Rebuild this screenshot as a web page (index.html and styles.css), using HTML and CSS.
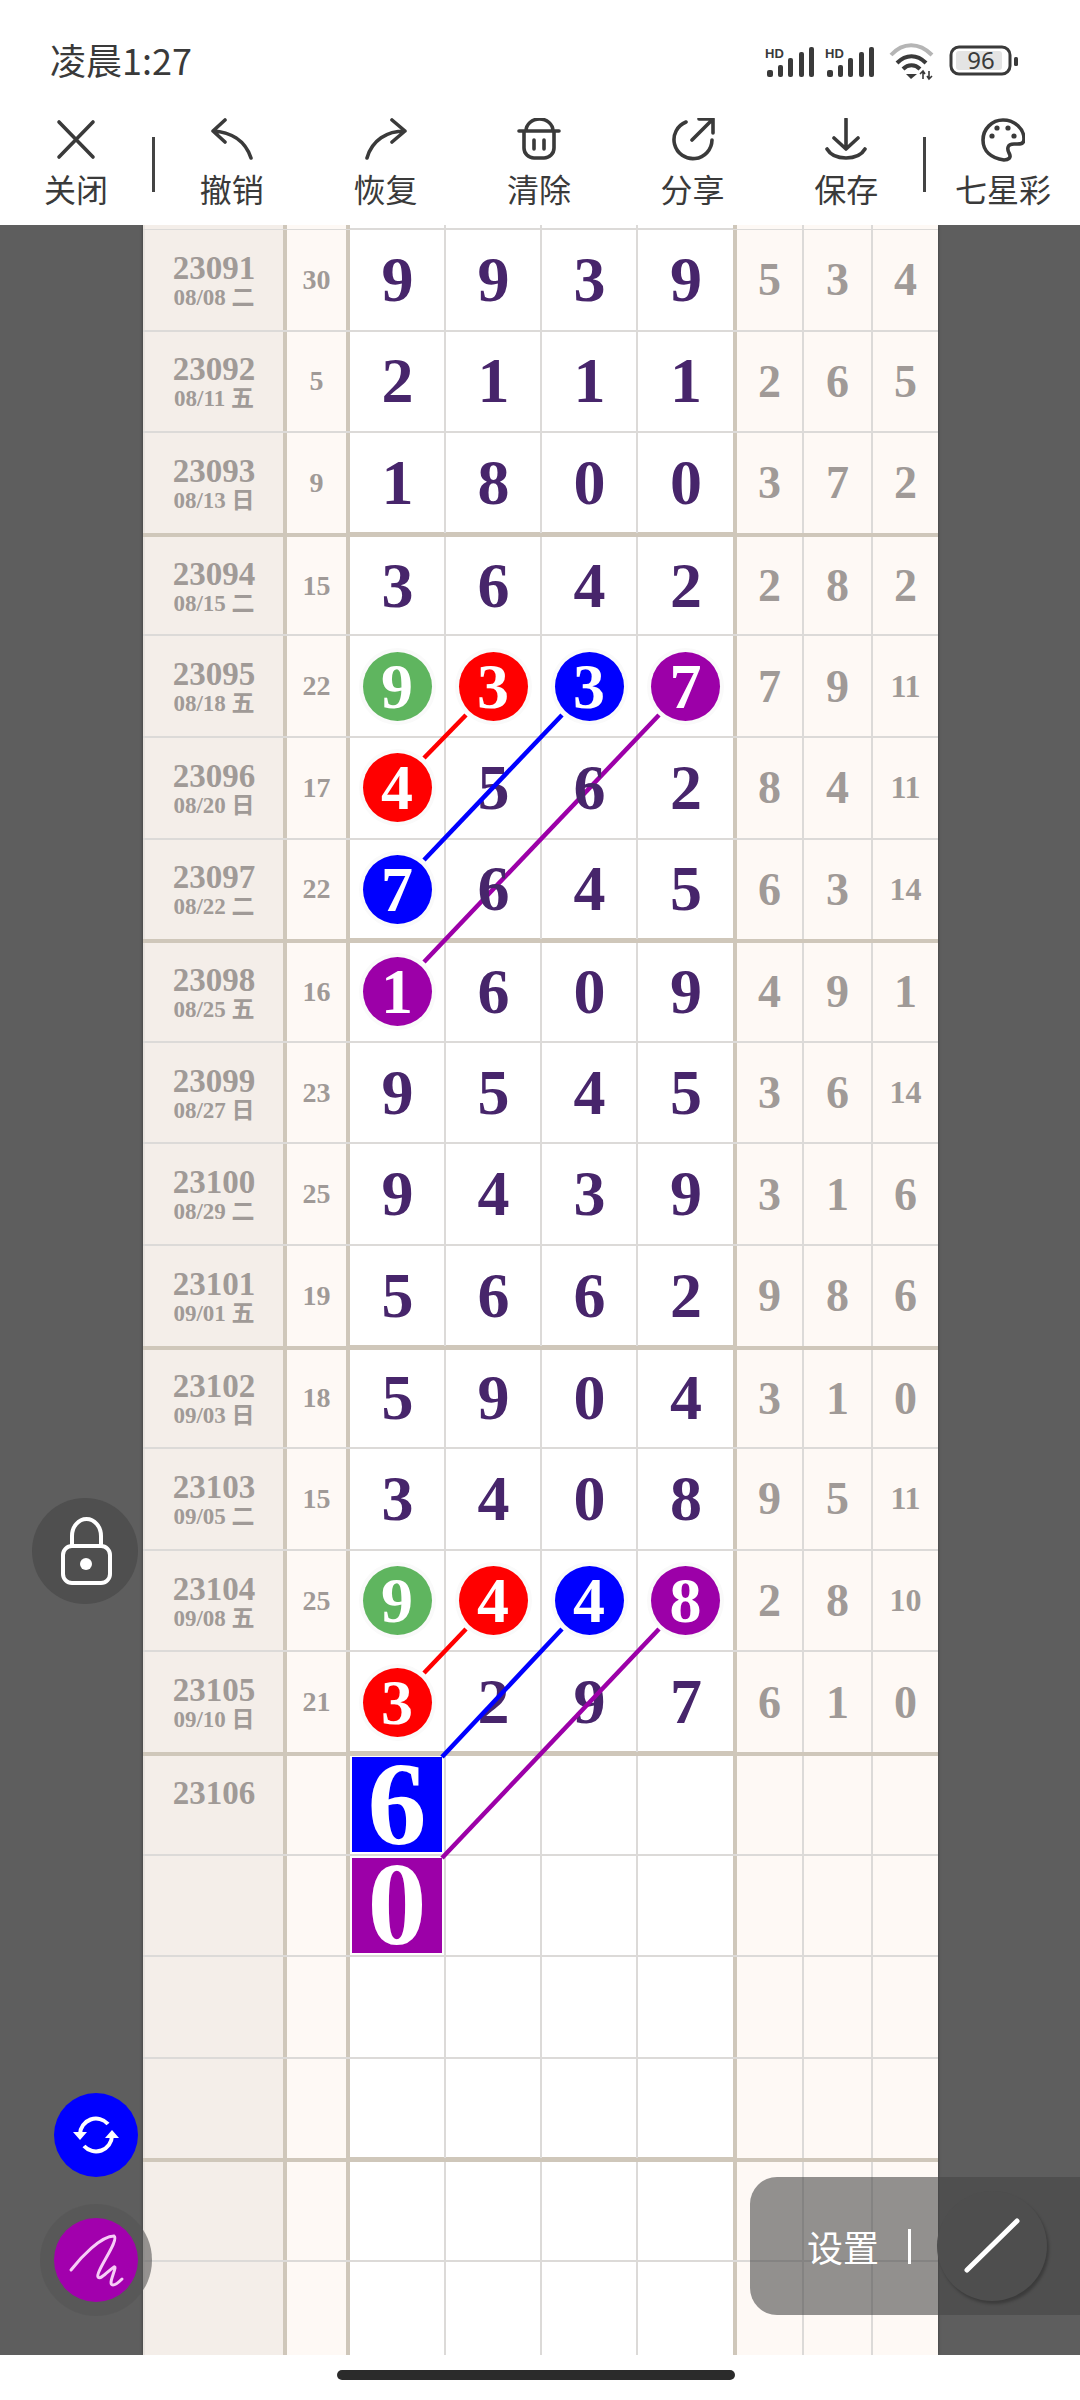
FILE: index.html
```html
<!DOCTYPE html>
<html lang="zh">
<head>
    <meta charset="utf-8">
    <title>七星彩</title>
    <link rel="stylesheet" href="styles.css">
</head>
<body>

<div class="status">
    <span class="time">凌晨1:27</span>
    <svg class="status-icons" width="256" height="40" viewBox="762 42 256 40">
        <g class="sig">
            <text x="765" y="58">HD</text>
            <rect x="767" y="70" width="6" height="7" rx="2"/>
            <rect x="778" y="65" width="5" height="12" rx="2"/>
            <rect x="788" y="58" width="5" height="19" rx="2"/>
            <rect x="799" y="52" width="5" height="25" rx="2"/>
            <rect x="809" y="47" width="5" height="30" rx="2"/>
        </g>
        <g class="sig">
            <text x="825" y="58">HD</text>
            <rect x="827" y="70" width="6" height="7" rx="2"/>
            <rect x="838" y="65" width="5" height="12" rx="2"/>
            <rect x="848" y="58" width="5" height="19" rx="2"/>
            <rect x="859" y="52" width="5" height="25" rx="2"/>
            <rect x="869" y="47" width="5" height="30" rx="2"/>
        </g>
        <path d="M891 55 C903 42 919 42 932 55" fill="none" stroke="#b5b5b5" stroke-width="4"/>
        <path d="M897 63 C906 54 917 54 926 63 M903 69 C908 64 915 64 920 69" fill="none" stroke="#3a3a3a" stroke-width="4"/>
        <path d="M906 74 H917 L911 79 Z" fill="#3a3a3a"/>
        <path d="M923 79 V72 M920 74 L923 71 L925 74 M929 71 V78 M927 76 L929 79 L932 76" fill="none" stroke="#3a3a3a" stroke-width="1.6"/>
        <rect x="951" y="47" width="59" height="27" rx="8" fill="none" stroke="#3a3a3a" stroke-width="3"/>
        <rect x="956" y="51" width="46" height="19" rx="3" fill="#e4e4e4"/>
        <rect x="1014" y="57" width="4" height="9" rx="1.5" fill="#3a3a3a"/>
        <text class="batt" x="981" y="69">96</text>
    </svg>
</div>

<div class="toolbar">
    <div class="tool tool-close">
        <svg class="icon" viewBox="0 0 44 44"><path d="M5 4 L39 39 M39 4 L5 39"/></svg>
        <span>关闭</span>
    </div>
    <i class="tool-sep"></i>
    <div class="tool">
        <svg class="icon" viewBox="0 0 44 44"><path d="M15 2 L3 13 L15 24 M3 13 C20 14 35 22 41 40"/></svg>
        <span>撤销</span>
    </div>
    <div class="tool">
        <svg class="icon" viewBox="0 0 44 44"><path d="M29 2 L42 13 L29 24 M42 13 C24 13 9 22 4 40"/></svg>
        <span>恢复</span>
    </div>
    <div class="tool">
        <svg class="icon" viewBox="0 0 44 44"><path d="M2 13 H42 M9 13 A13.5 12 0 0 1 36 13 M7 13 V30 A10 10 0 0 0 17 40 H27 A10 10 0 0 0 37 30 V13 M17 22 V31 M27 22 V31"/></svg>
        <span>清除</span>
    </div>
    <div class="tool">
        <svg class="icon" viewBox="0 0 44 44"><path d="M15 4 A19 19 0 1 0 41 22 M21 22 L42 1 M28 1 H42 V15"/></svg>
        <span>分享</span>
    </div>
    <div class="tool">
        <svg class="icon" viewBox="0 0 44 44"><path d="M22 1 V30 M10 20 L22 31 L34 20 M3 31 C10 43 34 43 41 31"/></svg>
        <span>保存</span>
    </div>
    <i class="tool-sep"></i>
    <div class="tool tool-last">
        <svg class="icon" viewBox="0 0 44 44">
            <path d="M22 2 C34 2 43 11 43 21 C43 27 38 26 33 26 C26 26 26 31 28 35 C31 40 27 42 23 42 C10 40 2 33 2 22 C2 11 11 2 22 2 Z"/>
            <circle class="dot" cx="16" cy="10" r="2.6"/><circle class="dot" cx="27" cy="10" r="2.6"/>
            <circle class="dot" cx="11" cy="18" r="2.6"/><circle class="dot" cx="33" cy="18" r="2.6"/>
        </svg>
        <span>七星彩</span>
    </div>
</div>

<div class="sheet">
    <div class="board">
        <div class="row stub"><div class="cell date"></div><div class="cell count"></div><div class="cell"></div><div class="cell"></div><div class="cell"></div><div class="cell end"></div><div class="cell side"></div><div class="cell side"></div><div class="cell side last"></div></div>

        <div class="row"><div class="cell date"><b>23091</b><small>08/08 二</small></div><div class="cell count">30</div><div class="cell"><span class="n">9</span></div><div class="cell"><span class="n">9</span></div><div class="cell"><span class="n">3</span></div><div class="cell end"><span class="n">9</span></div><div class="cell side">5</div><div class="cell side">3</div><div class="cell side last">4</div></div>
        <div class="row"><div class="cell date"><b>23092</b><small>08/11 五</small></div><div class="cell count">5</div><div class="cell"><span class="n">2</span></div><div class="cell"><span class="n">1</span></div><div class="cell"><span class="n">1</span></div><div class="cell end"><span class="n">1</span></div><div class="cell side">2</div><div class="cell side">6</div><div class="cell side last">5</div></div>
        <div class="row"><div class="cell date"><b>23093</b><small>08/13 日</small></div><div class="cell count">9</div><div class="cell"><span class="n">1</span></div><div class="cell"><span class="n">8</span></div><div class="cell"><span class="n">0</span></div><div class="cell end"><span class="n">0</span></div><div class="cell side">3</div><div class="cell side">7</div><div class="cell side last">2</div></div>

        <div class="row major"><div class="cell date"><b>23094</b><small>08/15 二</small></div><div class="cell count">15</div><div class="cell"><span class="n">3</span></div><div class="cell"><span class="n">6</span></div><div class="cell"><span class="n">4</span></div><div class="cell end"><span class="n">2</span></div><div class="cell side">2</div><div class="cell side">8</div><div class="cell side last">2</div></div>
        <div class="row"><div class="cell date"><b>23095</b><small>08/18 五</small></div><div class="cell count">22</div><div class="cell"><span class="ball green">9</span></div><div class="cell"><span class="ball red">3</span></div><div class="cell"><span class="ball blue">3</span></div><div class="cell end"><span class="ball purple">7</span></div><div class="cell side">7</div><div class="cell side">9</div><div class="cell side last tight">11</div></div>
        <div class="row"><div class="cell date"><b>23096</b><small>08/20 日</small></div><div class="cell count">17</div><div class="cell"><span class="ball red">4</span></div><div class="cell"><span class="n">5</span></div><div class="cell"><span class="n">6</span></div><div class="cell end"><span class="n">2</span></div><div class="cell side">8</div><div class="cell side">4</div><div class="cell side last tight">11</div></div>
        <div class="row"><div class="cell date"><b>23097</b><small>08/22 二</small></div><div class="cell count">22</div><div class="cell"><span class="ball blue">7</span></div><div class="cell"><span class="n">6</span></div><div class="cell"><span class="n">4</span></div><div class="cell end"><span class="n">5</span></div><div class="cell side">6</div><div class="cell side">3</div><div class="cell side last tight">14</div></div>

        <div class="row major"><div class="cell date"><b>23098</b><small>08/25 五</small></div><div class="cell count">16</div><div class="cell"><span class="ball purple">1</span></div><div class="cell"><span class="n">6</span></div><div class="cell"><span class="n">0</span></div><div class="cell end"><span class="n">9</span></div><div class="cell side">4</div><div class="cell side">9</div><div class="cell side last">1</div></div>
        <div class="row"><div class="cell date"><b>23099</b><small>08/27 日</small></div><div class="cell count">23</div><div class="cell"><span class="n">9</span></div><div class="cell"><span class="n">5</span></div><div class="cell"><span class="n">4</span></div><div class="cell end"><span class="n">5</span></div><div class="cell side">3</div><div class="cell side">6</div><div class="cell side last tight">14</div></div>
        <div class="row"><div class="cell date"><b>23100</b><small>08/29 二</small></div><div class="cell count">25</div><div class="cell"><span class="n">9</span></div><div class="cell"><span class="n">4</span></div><div class="cell"><span class="n">3</span></div><div class="cell end"><span class="n">9</span></div><div class="cell side">3</div><div class="cell side">1</div><div class="cell side last">6</div></div>
        <div class="row"><div class="cell date"><b>23101</b><small>09/01 五</small></div><div class="cell count">19</div><div class="cell"><span class="n">5</span></div><div class="cell"><span class="n">6</span></div><div class="cell"><span class="n">6</span></div><div class="cell end"><span class="n">2</span></div><div class="cell side">9</div><div class="cell side">8</div><div class="cell side last">6</div></div>

        <div class="row major"><div class="cell date"><b>23102</b><small>09/03 日</small></div><div class="cell count">18</div><div class="cell"><span class="n">5</span></div><div class="cell"><span class="n">9</span></div><div class="cell"><span class="n">0</span></div><div class="cell end"><span class="n">4</span></div><div class="cell side">3</div><div class="cell side">1</div><div class="cell side last">0</div></div>
        <div class="row"><div class="cell date"><b>23103</b><small>09/05 二</small></div><div class="cell count">15</div><div class="cell"><span class="n">3</span></div><div class="cell"><span class="n">4</span></div><div class="cell"><span class="n">0</span></div><div class="cell end"><span class="n">8</span></div><div class="cell side">9</div><div class="cell side">5</div><div class="cell side last tight">11</div></div>
        <div class="row"><div class="cell date"><b>23104</b><small>09/08 五</small></div><div class="cell count">25</div><div class="cell"><span class="ball green">9</span></div><div class="cell"><span class="ball red">4</span></div><div class="cell"><span class="ball blue">4</span></div><div class="cell end"><span class="ball purple">8</span></div><div class="cell side">2</div><div class="cell side">8</div><div class="cell side last tight">10</div></div>
        <div class="row"><div class="cell date"><b>23105</b><small>09/10 日</small></div><div class="cell count">21</div><div class="cell"><span class="ball red">3</span></div><div class="cell"><span class="n">2</span></div><div class="cell"><span class="n">9</span></div><div class="cell end"><span class="n">7</span></div><div class="cell side">6</div><div class="cell side">1</div><div class="cell side last">0</div></div>

        <div class="row major"><div class="cell date"><b>23106</b><small>&nbsp;</small></div><div class="cell count"></div><div class="cell"><span class="block blue">6</span></div><div class="cell"></div><div class="cell"></div><div class="cell end"></div><div class="cell side"></div><div class="cell side"></div><div class="cell side last"></div></div>
        <div class="row"><div class="cell date"></div><div class="cell count"></div><div class="cell"><span class="block purple">0</span></div><div class="cell"></div><div class="cell"></div><div class="cell end"></div><div class="cell side"></div><div class="cell side"></div><div class="cell side last"></div></div>
        <div class="row"><div class="cell date"></div><div class="cell count"></div><div class="cell"></div><div class="cell"></div><div class="cell"></div><div class="cell end"></div><div class="cell side"></div><div class="cell side"></div><div class="cell side last"></div></div>
        <div class="row"><div class="cell date"></div><div class="cell count"></div><div class="cell"></div><div class="cell"></div><div class="cell"></div><div class="cell end"></div><div class="cell side"></div><div class="cell side"></div><div class="cell side last"></div></div>

        <div class="row major"><div class="cell date"></div><div class="cell count"></div><div class="cell"></div><div class="cell"></div><div class="cell"></div><div class="cell end"></div><div class="cell side"></div><div class="cell side"></div><div class="cell side last"></div></div>
        <div class="row"><div class="cell date"></div><div class="cell count"></div><div class="cell"></div><div class="cell"></div><div class="cell"></div><div class="cell end"></div><div class="cell side"></div><div class="cell side"></div><div class="cell side last"></div></div>
    </div>

    <!-- drawn strokes, in page coordinates -->
    <svg class="strokes under" viewBox="0 225 1080 2130">
        <line x1="659" y1="715" x2="424" y2="962" stroke="#9c00a8"/>
    </svg>
    <svg class="strokes over" viewBox="0 225 1080 2130">
        <line x1="466" y1="715" x2="424" y2="758" stroke="#f00"/>
        <line x1="562" y1="715" x2="424" y2="860" stroke="#00f"/>
        <line x1="466" y1="1629" x2="424" y2="1673" stroke="#f00"/>
        <line x1="562" y1="1629" x2="442" y2="1757" stroke="#00f"/>
        <line x1="659" y1="1629" x2="442" y2="1858" stroke="#9c00a8"/>
    </svg>

    <div class="lock">
        <svg width="106" height="106" viewBox="0 0 106 106">
            <path d="M40 47 V38 A14.5 17 0 0 1 69 38 V47" fill="none" stroke="#fff" stroke-width="4"/>
            <rect x="31" y="48" width="47" height="37" rx="9" fill="none" stroke="#fff" stroke-width="4"/>
            <circle cx="54" cy="66" r="6" fill="#fff"/>
        </svg>
    </div>

    <div class="fab fab-sync">
        <svg width="84" height="84" viewBox="-42 -42 84 84">
            <path d="M-16 -1 A16 16 0 0 1 12 -11 M16 1 A16 16 0 0 1 -12 11" fill="none" stroke="#fff" stroke-width="4"/>
            <path d="M-23 -3 H-9 L-16 5 Z M23 3 H9 L16 -5 Z" fill="#fff"/>
        </svg>
    </div>

    <div class="fab fab-pen">
        <svg width="84" height="84" viewBox="-42 -42 84 84">
            <path d="M-25 10 C-15 -3 5 -24 18 -24 C24 -20 -1 12 2 17 C4 22 20 2 19 8 C18 14 12 25 17 25 C20 25 24 21 26 19" fill="none" stroke="#f7cdf7" stroke-width="3" stroke-linecap="round"/>
        </svg>
    </div>

    <div class="settings">
        <span class="settings-label">设置</span>
        <i class="settings-sep"></i>
        <div class="settings-btn">
            <svg width="110" height="110" viewBox="0 0 110 110"><line x1="30" y1="79" x2="80" y2="30" stroke="#fff" stroke-width="5" stroke-linecap="round"/></svg>
        </div>
    </div>
</div>

<div class="home"><i></i></div>

</body>
</html>
```

FILE: styles.css
```css
:root {
    --ink: #3a3a3a;
    --digit: #47256b;
    --muted: #a09a97;
    --rule: #cfc7ba;
    --thin: #dcdad8;
    --date-bg: #f4eee9;
    --side-bg: #fef9f5;
    --gutter: #5e5e5e;
}

body {
    margin: 0;
    position: relative;
    background: white;
    font-family: "Noto Sans CJK SC", "Noto Sans", sans-serif;
    color: var(--ink);
}

/* status bar */

.status {
    height: 100px;
    box-sizing: border-box;
    padding: 35px 62px 0 50px;
    display: flex;
    justify-content: space-between;
    align-items: flex-start;
}

.time {
    font-size: 36px;
    line-height: 48px;
}

.status-icons {
    margin-top: 7px;
}

.sig rect {
    fill: var(--ink);
}

.sig text {
    font: bold 13px "Liberation Sans", sans-serif;
    fill: var(--ink);
}

.batt {
    font: 24px "Noto Sans", sans-serif;
    fill: var(--ink);
    text-anchor: middle;
}

/* toolbar */

.toolbar {
    height: 125px;
    box-sizing: border-box;
    padding-top: 18px;
    display: flex;
}

.tool {
    width: 153.6px;
    display: flex;
    flex-direction: column;
    align-items: center;
    font-size: 32px;
    line-height: 44px;
}

.tool-close {
    width: 152px;
}

.tool-last {
    flex: 1;
}

.tool span {
    margin-top: 4px;
}

.icon {
    width: 44px;
    height: 44px;
    fill: none;
    stroke: var(--ink);
    stroke-width: 3.6;
    stroke-linecap: round;
    stroke-linejoin: round;
}

.icon .dot {
    fill: var(--ink);
    stroke: none;
}

.tool-sep {
    width: 3px;
    height: 55px;
    margin-top: 19px;
    background: #444;
}

/* sheet */

.sheet {
    position: relative;
    height: 2130px;
    background: var(--gutter);
    overflow: hidden;
}

.board {
    width: 795px;
    height: 100%;
    margin-left: 143px;
    overflow: hidden;
    background: white;
    box-shadow: 0 0 3px rgba(0, 0, 0, .4);
    font-family: "Liberation Serif", "Noto Sans CJK SC", serif;
    font-weight: bold;
}

.row {
    display: grid;
    grid-template-columns: 144px 63px 96px 96px 96px 99px 67px 69px 65px;
    height: 101.6px;
    box-sizing: border-box;
    border-bottom: 2px solid var(--thin);
}

.row.stub {
    height: 5px;
}

.row.major {
    height: 104.6px;
    margin-top: -3px;
    border-top: 5px solid var(--rule);
}

.cell {
    display: flex;
    align-items: center;
    justify-content: center;
    border-right: 2px solid var(--thin);
}

.cell.end {
    border-right: 4px solid var(--rule);
}

.date {
    box-sizing: border-box;
    padding-top: 4px;
    flex-direction: column;
    background: var(--date-bg);
    border-left: 2px solid #e9e4df;
    border-right: 4px solid var(--rule);
    color: var(--muted);
}

.date b {
    font-size: 33px;
    line-height: 32px;
}

.date small {
    font-size: 23px;
    line-height: 28px;
}

.count {
    background: var(--side-bg);
    border-right: 4px solid var(--rule);
    color: var(--muted);
    font-size: 28px;
}

.side {
    background: var(--side-bg);
    color: var(--muted);
    font-size: 46px;
}

.side.last {
    border-right: none;
}

.side.tight {
    font-size: 32px;
}

.n {
    position: relative;
    z-index: 2;
    padding-left: 1px;
    font-size: 64px;
    color: var(--digit);
}

.ball {
    position: relative;
    z-index: 2;
    width: 69px;
    height: 69px;
    border-radius: 50%;
    display: flex;
    align-items: center;
    justify-content: center;
    box-shadow: 0 0 0 4px #fafafa;
    font-size: 64px;
    line-height: 69px;
    color: white;
}

.block {
    position: relative;
    z-index: 2;
    width: 90px;
    height: 95px;
    display: flex;
    align-items: center;
    justify-content: center;
    font-size: 118px;
    line-height: 90px;
    color: white;
}

.green { background: #5fb55f; }
.red { background: #f00; }
.blue { background: #00f; }
.purple { background: #9c00a8; }

.strokes {
    position: absolute;
    top: 0;
    left: 0;
    width: 1080px;
    height: 2130px;
    stroke-width: 4.5;
    pointer-events: none;
}

.strokes.under { z-index: 1; }
.strokes.over { z-index: 3; }

/* floating controls */

.lock {
    position: absolute;
    left: 32px;
    top: 1273px;
    z-index: 4;
    width: 106px;
    height: 106px;
    border-radius: 50%;
    background: #4f4f4f;
}

.fab {
    position: absolute;
    z-index: 4;
    left: 54px;
    width: 84px;
    height: 84px;
    border-radius: 50%;
}

.fab-sync {
    top: 1868px;
    background: #00f;
}

.fab-pen {
    top: 1993px;
    background: #a200ad;
    box-shadow: 0 0 0 14px rgba(85, 85, 85, .6);
}

.settings {
    position: absolute;
    z-index: 4;
    right: 0;
    top: 1952px;
    width: 330px;
    height: 138px;
    box-sizing: border-box;
    padding-left: 57px;
    display: flex;
    align-items: center;
    border-radius: 27px 0 0 27px;
    background: rgba(69, 69, 69, .59);
    color: white;
}

.settings-label {
    font-size: 36px;
}

.settings-sep {
    width: 3px;
    height: 35px;
    margin-left: 29px;
    background: white;
}

.settings-btn {
    width: 110px;
    height: 110px;
    margin-left: 26px;
    border-radius: 50%;
    background: #4e4e4e;
    box-shadow: 2px 3px 3px rgba(0, 0, 0, .25);
}

/* home indicator */

.home {
    padding: 15px 8px 0 0;
    display: flex;
    justify-content: center;
}

.home i {
    width: 398px;
    height: 10px;
    border-radius: 5px;
    background: #2b2b2b;
}
```
